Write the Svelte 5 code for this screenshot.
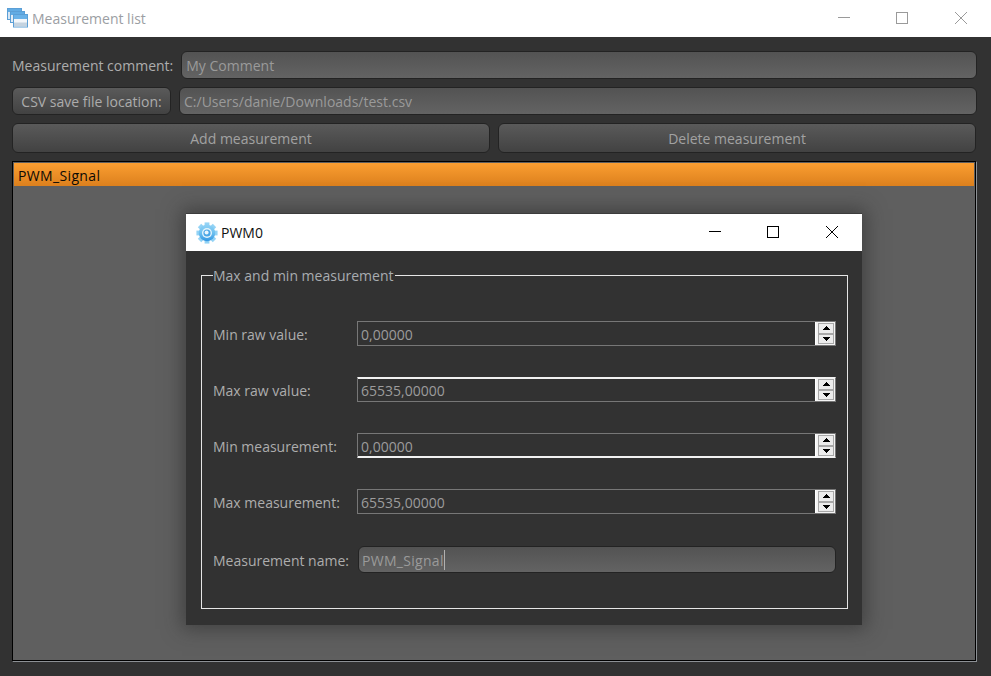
<script>
  const spins = [
    { label: 'Min raw value:', value: '0,00000', edge: '' },
    { label: 'Max raw value:', value: '65535,00000', edge: 'top' },
    { label: 'Min measurement:', value: '0,00000', edge: 'bottom' },
    { label: 'Max measurement:', value: '65535,00000', edge: '' }
  ];
  const teeth = [0, 45, 90, 135, 180, 225, 270, 315];
</script>

<div class="window">
  <header class="titlebar">
    <svg class="appicon" width="21" height="20" viewBox="0 0 21 20">
      <rect x="0.5" y="0.5" width="14" height="11" fill="#d6e6f5" stroke="#5b9fd6"/>
      <rect x="1" y="1" width="13" height="3" fill="#62ace4"/>
      <rect x="3.5" y="3.5" width="14" height="11" fill="#e3edf6" stroke="#5b9fd6"/>
      <rect x="4" y="4" width="13" height="3" fill="#62ace4"/>
      <rect x="6.5" y="6.5" width="14" height="12.5" fill="#f2f6fa" stroke="#5b9fd6"/>
      <rect x="7" y="7" width="13" height="4" fill="#6ab2e8"/>
      <rect x="7" y="14.5" width="13" height="4" fill="#c4d3e0"/>
    </svg>
    <span class="title">Measurement list</span>
    <div class="controls dim">
      <svg class="min" width="14" height="14" viewBox="0 0 14 14"><path d="M1 6.5h12" stroke="#9a9a9a" fill="none"/></svg>
      <svg width="14" height="14" viewBox="0 0 14 14"><rect x="1.5" y="1.5" width="11" height="11" stroke="#9a9a9a" fill="none"/></svg>
      <svg width="14" height="14" viewBox="0 0 14 14"><path d="M1 1l12 12M13 1L1 13" stroke="#9a9a9a" fill="none"/></svg>
    </div>
  </header>

  <main class="body">
    <div class="row first">
      <span class="label">Measurement comment:</span>
      <div class="field">My Comment</div>
    </div>
    <div class="row second">
      <button class="btn csv">CSV save file location:</button>
      <div class="field">C:/Users/danie/Downloads/test.csv</div>
    </div>
    <div class="row third">
      <button class="btn wide">Add measurement</button>
      <button class="btn wide">Delete measurement</button>
    </div>
    <div class="list">
      <div class="item">PWM_Signal</div>
    </div>
  </main>

  <section class="dialog">
    <header class="dlgbar">
      <svg class="gear" width="22" height="22" viewBox="0 0 22 22">
        <defs>
          <linearGradient id="g" gradientUnits="userSpaceOnUse" x1="0" y1="0" x2="0" y2="22">
            <stop offset="0" stop-color="#9ad6f6"/>
            <stop offset="0.5" stop-color="#6cc0f0"/>
            <stop offset="1" stop-color="#1c86dc"/>
          </linearGradient>
        </defs>
        {#each teeth as a}
          <rect x="8.6" y="0.4" width="4.8" height="5" fill="url(#g)" transform="rotate({a} 11 11)"/>
        {/each}
        <circle cx="11" cy="11" r="8.2" fill="url(#g)"/>
        <circle cx="11" cy="11" r="5" fill="#e4f4fc"/>
        <circle cx="11" cy="11" r="3.6" fill="#4aa6e6"/>
        <circle cx="10.6" cy="10.6" r="2" fill="#eaf6fd"/>
      </svg>
      <span class="dlgtitle">PWM0</span>
      <div class="controls dark">
        <svg class="min" width="14" height="14" viewBox="0 0 14 14"><path d="M1 6.5h12" stroke="#000" fill="none"/></svg>
        <svg width="14" height="14" viewBox="0 0 14 14"><rect x="1.5" y="1.5" width="11" height="11" stroke="#000" fill="none"/></svg>
        <svg width="14" height="14" viewBox="0 0 14 14"><path d="M1 1l12 12M13 1L1 13" stroke="#000" fill="none"/></svg>
      </div>
    </header>
    <div class="dlgbody">
      <fieldset class="group">
        <legend>Max and min measurement</legend>
        {#each spins as s}
          <div class="spinrow">
            <span class="label name">{s.label}</span>
            <div class="spin {s.edge}">
              <span class="spinval">{s.value}</span>
              <div class="arrows">
                <span class="arrow"><svg width="7" height="4" viewBox="0 0 7 4" shape-rendering="crispEdges"><path d="M3 0h1v1h1v1h1v1h1v1H0V3h1V2h1V1h1z" fill="#000"/></svg></span>
                <span class="arrow"><svg width="7" height="4" viewBox="0 0 7 4" shape-rendering="crispEdges"><path d="M0 0h7v1H6v1H5v1H4v1H3V3H2V2H1V1H0z" fill="#000"/></svg></span>
              </div>
            </div>
          </div>
        {/each}
        <div class="namerow">
          <span class="label name">Measurement name:</span>
          <div class="field namefield"><span class="caret">PWM_Signal</span></div>
        </div>
      </fieldset>
    </div>
  </section>
</div>

<style>
  :global(body) {
    margin: 0;
    background: #323232;
  }
  .window {
    position: relative;
    width: 991px;
    height: 676px;
    overflow: hidden;
    font-family: "Open Sans", "Noto Sans", sans-serif;
    font-size: 14px;
    color: #aaa;
  }
  .titlebar {
    display: flex;
    align-items: center;
    height: 37px;
    background: #fff;
    padding-left: 7px;
    box-sizing: border-box;
  }
  .appicon { margin-right: 4px; margin-top: -1px; }
  .title { color: #9b9ea3; }
  .controls {
    margin-left: auto;
    margin-bottom: 1px;
    display: flex;
    align-items: center;
    gap: 45px;
    padding-right: 23px;
  }
  .min { margin-right: -1px; }
  .body {
    display: flex;
    flex-direction: column;
    padding: 14px 14px 14px 12px;
    height: 639px;
    box-sizing: border-box;
    background: #323232;
  }
  .row { display: flex; align-items: stretch; }
  .first { height: 28px; gap: 8px; align-items: center; }
  .second { height: 28px; gap: 8px; margin-top: 8px; }
  .third { height: 30px; gap: 8px; margin-top: 8px; margin-right: 1px; }
  .label { color: #adadad; white-space: nowrap; }
  .field {
    flex: 1;
    box-sizing: border-box;
    display: flex;
    align-items: center;
    height: 28px;
    padding-left: 4px;
    color: #9a9a9a;
    border: 1px solid #232323;
    border-radius: 6px;
    background: linear-gradient(#535353, #636363);
  }
  .btn {
    font: inherit;
    color: #a2a2a2;
    border: 1px solid #232323;
    border-radius: 6px;
    background: linear-gradient(#5a5a5a, #424242);
    padding: 0;
    box-sizing: border-box;
  }
  .csv { width: 159px; flex: none; color: #acacac; }
  .wide { flex: 1; }
  .list {
    flex: 1;
    margin-top: 8px;
    border: 1px solid;
    border-color: #000 #8c9094 #8c9094 #000;
    box-sizing: border-box;
    padding: 1px 2px 0 1px;
    background: #5f5f5f;
    box-shadow: inset -1px -1px 0 #000;
  }
  .item {
    height: 23px;
    line-height: 25px;
    padding-left: 4px;
    color: #0c0a05;
    letter-spacing: 0.35px;
    background: linear-gradient(#fb9e31, #dc801d);
  }
  .dialog {
    position: absolute;
    left: 186px;
    top: 213px;
    width: 676px;
    height: 412px;
    background: #323232;
    box-shadow: 0 0 18px 4px rgba(40, 40, 40, 0.55);
    border-top: 1px solid #3c3c3c;
    box-sizing: border-box;
  }
  .dlgbar {
    display: flex;
    align-items: center;
    height: 37px;
    background: #fff;
    padding-left: 10px;
    box-sizing: border-box;
  }
  .gear { margin-right: 3px; }
  .dlgtitle { color: #111; }
  .dlgbody {
    padding: 14px 14px 0 15px;
  }
  .group {
    margin: 0;
    padding: 36px 11px 0 11px;
    height: 344px;
    box-sizing: border-box;
    border: 1px solid #e6e6e6;
    display: flex;
    flex-direction: column;
  }
  .group legend {
    padding: 2px 2px 0 0;
    color: #a8acb0;
    line-height: 18px;
  }
  .spinrow {
    display: flex;
    align-items: center;
    height: 25px;
    margin-bottom: 31px;
  }
  .name { width: 144px; flex: none; padding-top: 2px; }
  .spinval { padding-top: 2px; }
  .spin {
    flex: 1;
    height: 25px;
    box-sizing: border-box;
    display: flex;
    align-items: center;
    justify-content: space-between;
    padding-left: 3px;
    border: 1px solid #777;
    color: #9c9c9c;
  }
  .spin.top { border-top-color: #f2f2f2; box-shadow: inset 0 1px 0 #f2f2f2; }
  .spin.bottom { border-bottom-color: #f2f2f2; box-shadow: inset 0 -1px 0 #f2f2f2; }
  .arrows {
    display: flex;
    flex-direction: column;
    align-self: stretch;
    width: 20px;
    box-sizing: border-box;
    padding: 1px 1px 1px 2px;
    background: #f4f4f4;
    border-left: 1px solid #fff;
  }
  .arrow {
    flex: 1;
    display: flex;
    align-items: center;
    justify-content: center;
    border: 1px solid #a8a8a8;
    background: #ececec;
    box-sizing: border-box;
  }
  .namerow {
    display: flex;
    align-items: center;
    height: 27px;
    margin-top: 1px;
  }
  .namerow .name { width: 145px; }
  .namefield { flex: 1; padding-left: 3px; height: 27px; letter-spacing: 0.3px; }
  .caret { border-right: 1px solid #b0b0b0; padding-top: 1px; }
</style>
